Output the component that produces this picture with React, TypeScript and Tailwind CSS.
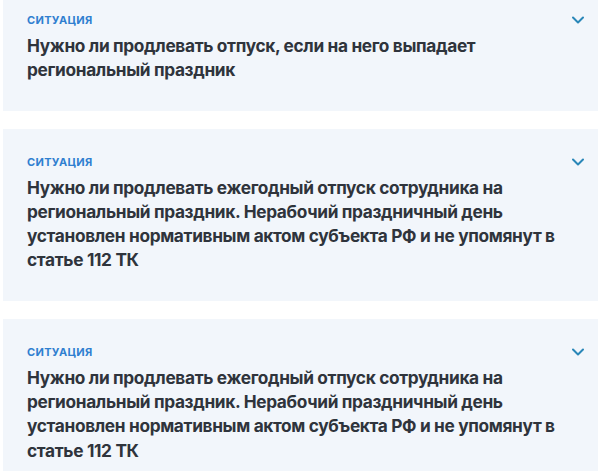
const items = [
  "Нужно ли продлевать отпуск, если на него выпадает региональный праздник",
  "Нужно ли продлевать ежегодный отпуск сотрудника на региональный праздник. Нерабочий праздничный день установлен нормативным актом субъекта РФ и не упомянут в статье 112 ТК",
  "Нужно ли продлевать ежегодный отпуск сотрудника на региональный праздник. Нерабочий праздничный день установлен нормативным актом субъекта РФ и не упомянут в статье 112 ТК",
];

function Chevron() {
  return (
    <svg width="12" height="8" viewBox="0 0 12 8" fill="none">
      <path d="M1 1.5 L6 6.5 L11 1.5" stroke="#2a87b8" strokeWidth="2" strokeLinecap="round" strokeLinejoin="round" />
    </svg>
  );
}

function SituationCard({ title }: { title: string }) {
  return (
    <div className="relative bg-[#f2f6fb] pl-6 pr-[10px] pt-[25px] pb-[28px]">
      <div className="text-[11px] leading-[16px] font-bold uppercase tracking-[0.03em] text-[#2f7fd0]">
        Ситуация
      </div>
      <div className="mt-[6px] text-[17.3px] leading-[24.3px] font-bold tracking-[-0.02em] text-[#2f343c]">
        {title}
      </div>
      <div className="absolute right-[14px] top-[29px]">
        <Chevron />
      </div>
    </div>
  );
}

export default function App() {
  return (
    <div
      className="h-screen bg-white pl-[3px] overflow-hidden"
      style={{ fontFamily: "Inter, 'Noto Sans', sans-serif" }}
    >
      <div className="-mt-[13px] flex flex-col gap-[18px]">
        {items.map((t, i) => (
          <SituationCard key={i} title={t} />
        ))}
      </div>
    </div>
  );
}
